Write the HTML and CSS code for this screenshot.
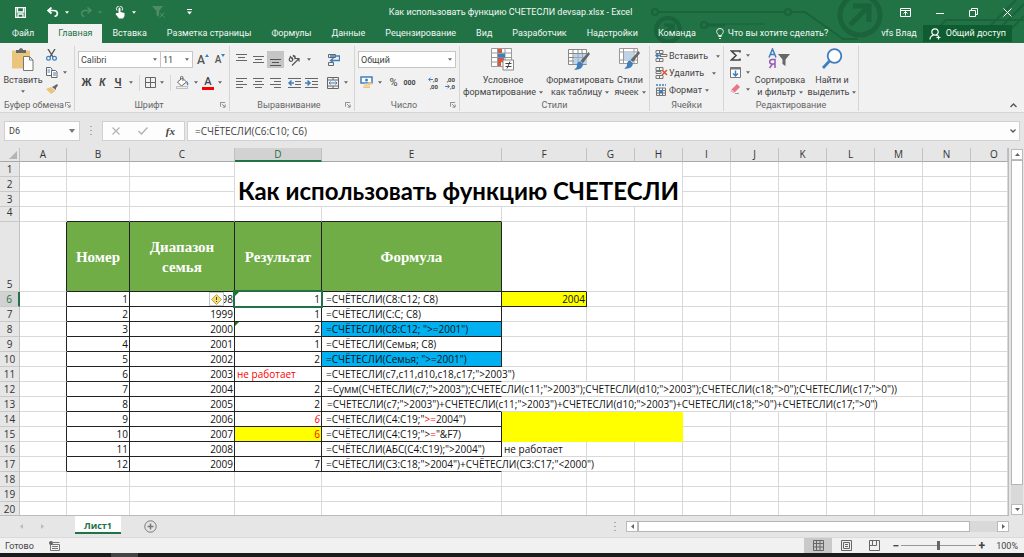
FILE: index.html
```html
<!DOCTYPE html>
<html lang="ru">
<head>
<meta charset="utf-8">
<title>Как использовать функцию СЧЕТЕСЛИ devsap.xlsx - Excel</title>
<link rel="stylesheet" href="styles.css">
</head>
<body>
<svg class="defs" width="0" height="0" aria-hidden="true">
  <symbol id="down" viewBox="0 0 5 3"><path d="M0 0h5L2.500 3z" fill="currentColor"/></symbol>
  <symbol id="launch" viewBox="0 0 7 7"><path d="M.5 5.500V.5H6M2.500 2.500l3 3M6 3v3H3" fill="none" stroke="#777"/></symbol>
  <symbol id="gridbase" viewBox="0 0 22 18"><path d="M.5.5h18v15H.5zM.5 4.500h18M.5 8.500h18M.5 12h18M5 .5v15M10 .5v15M14 .5v15" fill="#fff" stroke="#888"/></symbol>
  <symbol id="brush" viewBox="0 0 16 20"><path d="M14.500 1 16 3 9 12 6.500 10z" fill="#666"/><path d="M6 10.500 9 13c0 4-4 6.500-9 5.500 3-1.500 3-3 3-5 .5-2 1.500-3 3-3z" fill="#3f7fc0"/></symbol>
</svg>

<header class="top">
  <svg class="circuit" width="374" height="43" viewBox="650 0 374 43" fill="none" stroke="#1b633b" stroke-width="2" aria-hidden="true">
    <circle cx="655" cy="12" r="3"/><path d="M658 12h127"/><circle cx="788" cy="12" r="3"/><path d="M791 12h14l38 27h15"/>
    <circle cx="668" cy="30" r="12" stroke-width="4"/><path d="M662 36l10-10m-8-1h9v9" stroke-width="3"/>
    <circle cx="704" cy="25" r="3"/><path d="M707 25h18" stroke-width="3"/><path d="M725 24h40" stroke-width="1"/>
    <circle cx="860" cy="15" r="20" stroke-width="5"/><path d="M850 25l17-17M853 6h16v16" stroke-width="5"/>
    <path d="M938 28l8-8h78M986 30l30-30M994 34l30-30M1006 34l18-18"/>
  </svg>
  <div class="titlebar">
    <div class="quick">
      <button class="i q1" aria-label="Сохранить"><svg width="11" height="11" viewBox="0 0 11 11" fill="none" stroke="#fff"><path d="M.7.7h9.600v9.600H.7zM2.500 1v4h6V1M3 10V7h5v3" stroke-width="1.300"/></svg></button>
      <button class="i q2" aria-label="Отменить"><svg width="12" height="10" viewBox="0 0 12 10" fill="none" stroke="#fff" stroke-width="1.700"><path d="M4.500.5 1 3.500l3.500 3M1.500 3.500h5c5 0 5 5 1 6"/></svg></button>
      <button class="i q3 w" aria-label="Список отмены"><svg width="4" height="3"><use href="#down"/></svg></button>
      <button class="i q2 dim" aria-label="Повторить"><svg width="12" height="10" viewBox="0 0 12 10" fill="none" stroke="#4b8d67" stroke-width="1.500"><path d="M7.500.5 11 3.500l-3.500 3M10.500 3.500h-5c-5 0-5 5-1 6"/></svg></button>
      <button class="i q3 dim" aria-label="Список повтора"><svg width="4" height="3"><use href="#down"/></svg></button>
      <button class="i q4" aria-label="Режим касания"><svg width="10" height="13" viewBox="0 0 10 13"><path d="M3.500 7V2.500a1 1 0 0 1 2 0V6l4 1v3L8 12.500H4L.5 8l1-1z" fill="#fff"/><path d="M2 4.500a3 3 0 1 1 5 0" fill="none" stroke="#fff"/></svg></button>
      <button class="i q5 w" aria-label="Параметры касания"><svg width="4" height="3"><use href="#down"/></svg></button>
      <button class="i q6" aria-label="Очистить фильтр"><svg width="13" height="12" viewBox="0 0 13 12"><path d="M0 0h11L7 5v6L4.500 9V5z" fill="#4b8d67"/><path d="M7.500 6.500l5 5m0-5-5 5" stroke="#4b8d67"/></svg></button>
      <button class="i q7 w" aria-label="Настройка панели"><svg width="5" height="6" viewBox="0 0 5 6"><path d="M0 .5h5" stroke="#fff"/><path d="M0 2.500h5L2.500 5.500z" fill="#fff"/></svg></button>
    </div>
    <h1 class="caption">Как использовать функцию СЧЕТЕСЛИ devsap.xlsx - Excel</h1>
    <div class="winbtns">
      <button class="i" aria-label="Параметры ленты"><svg width="11" height="9" viewBox="0 0 11 9" fill="none" stroke="#fff"><path d="M.5.5h10v8H.5zM.5 2.500h10M5.500 7.500v-4M3.500 5.500l2-2 2 2"/></svg></button>
      <button class="i" aria-label="Свернуть"><svg width="8" height="9" viewBox="0 0 8 9"><path d="M0 5.500h8" stroke="#fff"/></svg></button>
      <button class="i" aria-label="Восстановить"><svg width="9" height="9" viewBox="0 0 9 9" fill="none" stroke="#fff"><path d="M.5 2.500h6v6h-6zM2.500 2.500v-2h6v6h-2"/></svg></button>
      <button class="i" aria-label="Закрыть"><svg width="9" height="9" viewBox="0 0 9 9"><path d="M.5.5l8 8m0-8-8 8" stroke="#fff"/></svg></button>
    </div>
  </div>
  <nav class="tabs">
    <a class="file" href="#">Файл</a><a class="on" href="#">Главная</a><a href="#">Вставка</a><a href="#">Разметка страницы</a><a href="#">Формулы</a><a href="#">Данные</a><a href="#">Рецензирование</a><a href="#">Вид</a><a href="#">Разработчик</a><a href="#">Надстройки</a><a href="#">Команда</a>
    <a class="tell" href="#"><svg width="8" height="11" viewBox="0 0 8 11" fill="none" stroke="#e6f1ea"><path d="M2.500 7.500C2.500 6 .6 5.500.6 3.500a3.400 3 0 0 1 6.800 0c0 2-1.900 2.500-1.900 4zM2.500 8.500h3M3 10.500h2"/></svg>Что вы хотите сделать?</a>
    <span class="user">vfs Влад</span>
    <button class="share"><svg width="12" height="12" viewBox="0 0 12 12" fill="none" stroke="#fff" stroke-width="1.200"><circle cx="6" cy="4" r="3.200"/><path d="M1 11.500c0-3 2-4 3.500-4.500M7.500 7l1 1M9.500 7.500v4M7.500 9.500h4"/></svg>Общий доступ</button>
  </nav>
</header>

<section class="ribbon">
  <div class="group g-clip">
    <div class="body">
      <button class="big paste"><svg width="22" height="23" viewBox="0 0 22 23"><path d="M0 2.500h18v18H0z" fill="#ecc57d"/><path d="M4 5V2h3c0-2.500 4-2.500 4 0h3v3z" fill="#666"/><path d="M11.500 8.500h6l3.500 3.500v10.500h-9.500z" fill="#fff" stroke="#777"/><path d="M17.500 8.500V12H21" fill="none" stroke="#777"/></svg><span>Вставить</span><svg class="dn" width="4" height="3"><use href="#down"/></svg></button>
      <div class="stack">
        <button class="i" aria-label="Вырезать"><svg width="11" height="12" viewBox="0 0 11 12" fill="none"><path d="M2 0l5 8M9 0L4 8" stroke="#555" stroke-width="1.400"/><circle cx="2.500" cy="9.200" r="1.900" stroke="#3f7fc0" stroke-width="1.200"/><circle cx="8.500" cy="9.200" r="1.900" stroke="#3f7fc0" stroke-width="1.200"/></svg></button>
        <button class="i" aria-label="Копировать"><svg width="12" height="11" viewBox="0 0 12 11" fill="#fff" stroke="#666"><path d="M.5.5h4L6 2v6.500H.5z"/><path d="M5.500 3.500h4L11 5v5.500H5.500z"/><path d="M7 6h3M7 8h3M1.500 3H4M1.500 5H4" stroke="#3f7fc0"/></svg><svg class="dn gap" width="4" height="3"><use href="#down"/></svg></button>
        <button class="i" aria-label="Формат по образцу"><svg width="12" height="10" viewBox="0 0 12 10"><path d="M6 3l2-1 3-2 1 1.500-2 2.500v2z" fill="#666"/><path d="M5 3l4.500 4L5 10 0 5z" fill="#ecc57d"/></svg></button>
      </div>
    </div>
    <div class="label"><span>Буфер обмена</span><svg width="6" height="6"><use href="#launch"/></svg></div>
  </div>

  <div class="group g-font">
    <div class="rows">
      <div class="row">
        <label class="combo w83"><select aria-label="Шрифт"><option>Calibri</option></select><svg width="4" height="3"><use href="#down"/></svg></label><label class="combo w32"><select aria-label="Размер шрифта"><option>11</option></select><svg width="4" height="3"><use href="#down"/></svg></label>
        <button class="i w20 glyph" aria-label="Увеличить размер шрифта">A<svg class="sup" width="4" height="3" viewBox="0 0 4 3"><path d="M0 3h4L2 0z" fill="#3f7fc0"/></svg></button>
        <button class="i w14 glyph sm" aria-label="Уменьшить размер шрифта">A<svg class="sup" width="4" height="3" viewBox="0 0 4 3"><path d="M0 0h4L2 3z" fill="#3f7fc0"/></svg></button>
      </div>
      <div class="row">
        <button class="i w17 fmt">Ж</button><button class="i w15 fmt it">К</button><button class="i w16 fmt un">Ч</button><button class="i w10" aria-label="Подчеркивание"><svg class="dn" width="4" height="3"><use href="#down"/></svg></button><i class="vs"></i>
        <button class="i w14" aria-label="Границы"><svg width="11" height="11" viewBox="0 0 11 11" fill="none" stroke="#666"><path d="M.5.5h10v10H.5zM5.500.5v10M.5 5.500h10"/></svg></button><button class="i w10" aria-label="Виды границ"><svg class="dn" width="4" height="3"><use href="#down"/></svg></button><i class="vs"></i>
        <button class="i w17" aria-label="Цвет заливки"><svg width="13" height="13" viewBox="0 0 13 13"><path d="M1.500 6l5-4 4 4-5 4z" fill="#fff" stroke="#666"/><path d="M4.500 4V1.500a1.200 1.200 0 0 1 2.400 0V5" fill="none" stroke="#666"/><path d="M10.500 5c2 1 2 3 1.500 4.500-1 0-1.500-2-1.500-4.500z" fill="#3f7fc0"/><path d="M.5 10.500h11v2H.5z" fill="#eee" stroke="#aaa" stroke-width=".7"/></svg></button><button class="i w10" aria-label="Цвета заливки"><svg class="dn" width="4" height="3"><use href="#down"/></svg></button>
        <button class="i fcolor" aria-label="Цвет текста">A</button><button class="i w10" aria-label="Цвета текста"><svg class="dn" width="4" height="3"><use href="#down"/></svg></button>
      </div>
    </div>
    <div class="label"><span>Шрифт</span><svg width="6" height="6"><use href="#launch"/></svg></div>
  </div>

  <div class="group g-align">
    <div class="rows">
      <div class="row">
        <button class="i w17" aria-label="По верхнему краю"><svg width="11" height="12" viewBox="0 0 11 12" stroke="#666"><path d="M0 .5h11M2 3.500h7M0 6.500h11"/></svg></button>
        <button class="i w17" aria-label="По середине"><svg width="11" height="10" viewBox="0 0 11 10" stroke="#666"><path d="M0 1.500h11M2 4.500h7M0 7.500h11"/></svg></button>
        <button class="i w17 sel" aria-label="По нижнему краю"><svg width="11" height="12" viewBox="0 0 11 12" stroke="#555"><path d="M0 5.500h11M2 8.500h7M0 11.500h11"/></svg></button>
        <button class="i w20" aria-label="Ориентация"><svg width="12" height="12" viewBox="0 0 12 12" fill="none" stroke="#555" stroke-width="1.200"><circle cx="3" cy="5.500" r="1.800"/><path d="M2 2l3 4M5 2.500c2-2 3 1 1.500 2.500M5 1l3 4M4 11.500l7-7M8 4.500h3v3"/></svg></button>
        <button class="i w10" aria-label="Виды ориентации"><svg class="dn" width="4" height="3"><use href="#down"/></svg></button><i class="sp11"></i>
        <button class="i w17" aria-label="Перенести текст"><svg width="12" height="12" viewBox="0 0 12 12" fill="none"><path d="M.5.5h7v3h-7zM.5 8.500h5v3h-5z" stroke="#666"/><path d="M2 2h9.500v4.500H3M5.500 4l-3 2.500 3 2.500" stroke="#3f7fc0" stroke-width="1.300"/></svg></button>
      </div>
      <div class="row">
        <button class="i w17" aria-label="По левому краю"><svg width="11" height="10" viewBox="0 0 11 10" stroke="#666"><path d="M0 .5h11M0 3.500h7M0 6.500h11M0 9.500h7"/></svg></button>
        <button class="i w17" aria-label="По центру"><svg width="11" height="10" viewBox="0 0 11 10" stroke="#666"><path d="M0 .5h11M2 3.500h7M0 6.500h11M2 9.500h7"/></svg></button>
        <button class="i w17" aria-label="По правому краю"><svg width="11" height="10" viewBox="0 0 11 10" stroke="#666"><path d="M0 .5h11M4 3.500h7M0 6.500h11M4 9.500h7"/></svg></button>
        <button class="i w20" aria-label="Уменьшить отступ"><svg width="13" height="10" viewBox="0 0 13 10" stroke="#666" fill="none"><path d="M0 .5h13M7 3.500h6M7 6.500h6M0 9.500h13"/><path d="M6 5H1M3.500 2.500 1 5l2.500 2.500" stroke="#3f7fc0" stroke-width="1.500"/></svg></button>
        <button class="i w14" aria-label="Увеличить отступ"><svg width="13" height="10" viewBox="0 0 13 10" stroke="#666" fill="none"><path d="M0 .5h13M7 3.500h6M7 6.500h6M0 9.500h13"/><path d="M0 5h5M2.500 2.500 5 5 2.500 7.500" stroke="#3f7fc0" stroke-width="1.500"/></svg></button>
        <i class="vs"></i>
        <button class="i w17" aria-label="Объединить"><svg width="12" height="12" viewBox="0 0 12 12" fill="none"><path d="M.5.5h11v11H.5zM.5 3h11M.5 9h11M6 .5V3M6 9v2.500" stroke="#666"/><path d="M2 6h8M3.500 4.500 2 6l1.500 1.500M8.500 4.500 10 6 8.500 7.500" stroke="#3f7fc0"/></svg></button><button class="i w10" aria-label="Виды объединения"><svg class="dn" width="4" height="3"><use href="#down"/></svg></button>
      </div>
    </div>
    <div class="label"><span>Выравнивание</span><svg width="6" height="6"><use href="#launch"/></svg></div>
  </div>

  <div class="group g-num">
    <div class="rows">
      <div class="row"><label class="combo wide"><select aria-label="Числовой формат"><option>Общий</option></select><svg width="4" height="3"><use href="#down"/></svg></label></div>
      <div class="row">
        <button class="i w17" aria-label="Денежный формат"><svg width="13" height="13" viewBox="0 0 13 13" fill="none"><path d="M1 1h11v6H1z" fill="#fff" stroke="#3f7fc0" stroke-width="1.500"/><circle cx="6.500" cy="4" r="1.500" fill="#3f7fc0"/><path d="M4 8h6v4H3z" fill="#ecc57d"/><path d="M4 8h8M3 10h8" stroke="#fff" stroke-width=".6"/><ellipse cx="10" cy="7.500" rx="2.500" ry="1.300" fill="#ecc57d"/></svg></button><button class="i w10" aria-label="Денежные форматы"><svg class="dn" width="4" height="3"><use href="#down"/></svg></button>
        <button class="i w17 pct">%</button><button class="i w15 zeros">000</button><i class="vs"></i>
        <button class="i w17 dec" aria-label="Увеличить разрядность"><span><svg width="5" height="5" viewBox="0 0 5 5"><path d="M5 2.500H.7M2.500.7.7 2.500l1.800 1.800" fill="none" stroke="#3f7fc0"/></svg>,0</span><span>,00</span></button><button class="i w17 dec" aria-label="Уменьшить разрядность"><span>,00</span><span><svg width="5" height="5" viewBox="0 0 5 5"><path d="M0 2.500h4.300M2.500.7l1.800 1.800-1.800 1.800" fill="none" stroke="#3f7fc0"/></svg>,0</span></button>
      </div>
    </div>
    <div class="label"><span>Число</span><svg width="6" height="6"><use href="#launch"/></svg></div>
  </div>

  <div class="group g-style">
    <div class="body">
      <button class="big b88"><svg width="24" height="23" viewBox="0 0 24 23"><path d="M.5.5h20v18H.5zM.5 5h20M.5 9.500h20M.5 14h20M6.500.5v18M14 .5v18" fill="#fff" stroke="#999"/><path d="M7 1h4v4H7zM7 10h6v4H7zM7 14h3v4H7z" fill="#d9583b"/><path d="M7 5.500h7v4H7z" fill="#3f7fc0"/><path d="M12 12h10.500v10H12z" fill="#fff" stroke="#888"/><path d="M14.500 15.500h6M14.500 18.500h6M19 13.500l-3 7" stroke="#444"/></svg><span>Условное<br>форматирование<svg class="dn" width="4" height="3"><use href="#down"/></svg></span></button>
      <button class="big b68"><svg width="24" height="23" viewBox="0 0 24 23"><use href="#gridbase" width="22" height="18" y="1"/><path d="M6 6h13v10H6z" fill="#bcd3e8"/><path d="M6 9.500h13M10 6v10M14.500 6v10" stroke="#9ab"/><use href="#brush" x="6" y="3" width="16" height="20"/></svg><span>Форматировать<br>как таблицу<svg class="dn" width="4" height="3"><use href="#down"/></svg></span></button>
      <button class="big b30"><svg width="24" height="23" viewBox="0 0 24 23"><path d="M1.500.5h18v15h-18zM1.500 4h18M1.500 12h18M5.500.5v15M16 .5v15" fill="#fff" stroke="#999"/><path d="M6 4.500h10v7.500H6z" fill="#bcd3e8"/><use href="#brush" x="6" y="2" width="16" height="20"/></svg><span>Стили<br>ячеек<svg class="dn" width="4" height="3"><use href="#down"/></svg></span></button>
    </div>
    <div class="label"><span>Стили</span></div>
  </div>

  <div class="group g-cells">
    <div class="stack">
      <button class="line"><svg width="13" height="12" viewBox="0 0 13 12" fill="none"><path d="M1 .5h7v3H1zM4.500.5v3M1 8.500h7v3H1zM4.500 8.500v3M5 4.500h7v2H5z" stroke="#777"/><path d="M6 5.500H1M3 3.500l-2 2 2 2" stroke="#3f7fc0" stroke-width="1.500"/></svg><span>Вставить</span><svg class="dn" width="4" height="3"><use href="#down"/></svg></button>
      <button class="line"><svg width="13" height="12" viewBox="0 0 13 12" fill="none"><path d="M1 .5h7v3H1zM4.500.5v3M1 8.500h7v3H1zM4.500 8.500v3M1 4.500h5v2H1z" stroke="#777"/><path d="M7 3l5 5m0-5L7 8" stroke="#d9583b" stroke-width="1.600"/></svg><span>Удалить</span><svg class="dn" width="4" height="3"><use href="#down"/></svg></button>
      <button class="line near"><svg width="13" height="12" viewBox="0 0 13 12" fill="none"><path d="M1 1h10" stroke="#3f7fc0" stroke-width="1.500" stroke-dasharray="2 1"/><path d="M1.500 4h9v7.500h-9zM1.500 6.500h9M1.500 9h9M4.500 4v7.500M7.500 4v7.500" stroke="#777"/><path d="M4 6h4v3H4z" fill="#3f7fc0"/></svg><span>Формат</span><svg class="dn" width="4" height="3"><use href="#down"/></svg></button>
    </div>
    <div class="label"><span>Ячейки</span></div>
  </div>

  <div class="group g-edit">
    <div class="body">
      <div class="stack">
        <button class="i" aria-label="Автосумма"><svg width="11" height="11" viewBox="0 0 11 11"><path d="M10 2.500V1H1.500L6 5.500 1.500 10H10V8.500" fill="none" stroke="#444" stroke-width="1.600"/></svg><svg class="dn gap" width="4" height="3"><use href="#down"/></svg></button>
        <button class="i" aria-label="Заполнить"><svg width="11" height="11" viewBox="0 0 11 11" fill="none"><path d="M.5.5h10v10H.5z" fill="#fff" stroke="#777"/><path d="M0 1.500h11" stroke="#777" stroke-width="2"/><path d="M5.500 3.500v5M3 6.500 5.500 9 8 6.500" stroke="#3f7fc0" stroke-width="1.500"/></svg><svg class="dn gap" width="4" height="3"><use href="#down"/></svg></button>
        <button class="i" aria-label="Очистить"><svg width="11" height="10" viewBox="0 0 11 10"><path d="M7 0l3 3-5.500 5.500-3-3z" fill="#e8768a"/><path d="M1.500 5.500l3 3-1 .8-3-2z" fill="#f3b5bf"/><path d="M5 9.500h4" stroke="#999"/></svg><svg class="dn gap" width="4" height="3"><use href="#down"/></svg></button>
      </div>
      <button class="big b54"><svg width="24" height="23" viewBox="0 0 24 23" fill="none"><path d="M1 9.500 4.500 1 8 9.500M2.500 6.500h4" stroke="#3f7fc0" stroke-width="1.500"/><path d="M7 20v-8.500H4C1 11.500 1 16 4 16h3M4.500 16 1.500 20" stroke="#9857b5" stroke-width="1.500"/><path d="M10 6h12l-4.500 5.500V18l-3-2v-4.500z" fill="#666"/></svg><span>Сортировка<br>и фильтр<svg class="dn" width="4" height="3"><use href="#down"/></svg></span></button>
      <button class="big b48"><svg width="24" height="23" viewBox="0 0 24 23" fill="none" stroke="#3f7fc0"><circle cx="14.500" cy="8" r="6.800" fill="#fff" stroke-width="1.800"/><path d="M9.500 13 3 20" stroke-width="2.800"/></svg><span>Найти и<br>выделить<svg class="dn" width="4" height="3"><use href="#down"/></svg></span></button>
    </div>
    <div class="label"><span>Редактирование</span></div>
  </div>
  <button class="i collapse" aria-label="Свернуть ленту"><svg width="7" height="5" viewBox="0 0 7 5"><path d="M.5 4l3-3 3 3" fill="none" stroke="#555" stroke-width="1.400"/></svg></button>
</section>

<section class="fbar">
  <label class="namebox"><input aria-label="Имя" value="D6"><svg width="6" height="4" viewBox="0 0 6 4"><path d="M0 0h6L3 4z" fill="#777"/></svg></label>
  <i class="dots"></i>
  <div class="fbtns">
    <button class="i" aria-label="Отмена"><svg width="8" height="8" viewBox="0 0 8 8"><path d="M.5.5l7 7m0-7-7 7" stroke="#b5b5b5" stroke-width="1.300"/></svg></button>
    <button class="i" aria-label="Ввод"><svg width="10" height="8" viewBox="0 0 10 8"><path d="M.5 4l3 3 6-6.500" fill="none" stroke="#b5b5b5" stroke-width="1.500"/></svg></button>
    <button class="i fx">fx</button>
  </div>
  <label class="finput"><input aria-label="Строка формул" value="=СЧЁТЕСЛИ(C6:C10; C6)"><svg width="6" height="4" viewBox="0 0 6 4"><path d="M.5.5 3 3 5.500.5" fill="none" stroke="#555" stroke-width="1.300"/></svg></label>
</section>

<main class="work">
  <div class="gridwrap">
  <table class="sheet">
    <colgroup><col class="c0"><col class="cA"><col class="cB"><col class="cC"><col class="cD"><col class="cE"><col class="cF"><col class="cG"><col class="cG"><col class="cG"><col class="cG"><col class="cG"><col class="cG"><col class="cG"><col class="cG"><col></colgroup>
    <thead><tr><th class="corner"><svg width="8" height="8" viewBox="0 0 8 8"><path d="M8 0v8H0z" fill="#b4b4b4"/></svg></th><th>A</th><th>B</th><th>C</th><th class="cur">D</th><th>E</th><th>F</th><th>G</th><th>H</th><th>I</th><th>J</th><th>K</th><th>L</th><th>M</th><th>N</th><th class="last">O</th></tr></thead>
    <tbody>
    <tr><th>1</th> <td><td><td> <td class="big-title" colspan="5" rowspan="3">Как использовать функцию СЧЕТЕСЛИ <td><td> <td><td><td><td><td></tr>
    <tr><th>2</th> <td><td><td> <td><td> <td><td><td><td><td></tr>
    <tr><th>3</th> <td><td><td> <td><td> <td><td><td><td><td></tr>
    <tr><th class="four">4</th> <td> <td class="u"><td class="u"><td class="u"><td class="u"> <td><td><td><td><td> <td><td><td><td><td></tr>
    <tr class="tall"><th>5</th><td class="r"><td class="h">Номер<td class="h">Диапазон<br>семья<td class="h">Результат<td class="h">Формула<td class="u"><td><td><td><td> <td><td><td><td><td></tr>
    <tr class="now"><th>6</th><td class="r"><td class="b n">1<td class="b n warned">1998<button class="warn" aria-label="Ошибка в ячейке"><svg width="11" height="11" viewBox="0 0 11 11"><path d="M5.500.5l5 5-5 5-5-5z" fill="#f7dc6f" stroke="#c3a64a"/><path d="M5.500 3v3M5.500 7v1" stroke="#444"/></svg></button><td class="b n tri active">1<td class="b">=СЧЁТЕСЛИ(C8:C12; C8)<td class="b n yel">2004<td><td><td><td> <td><td><td><td><td></tr>
    <tr><th>7</th><td class="r"><td class="b n">2<td class="b n">1999<td class="b n">1<td class="b">=СЧЁТЕСЛИ(C:C; C8)<td><td><td><td><td> <td><td><td><td><td></tr>
    <tr><th>8</th><td class="r"><td class="b n">3<td class="b n">2000<td class="b n tri">2<td class="b blue">=СЧЁТЕСЛИ(C8:C12; "&gt;=2001")<td><td><td><td><td> <td><td><td><td><td></tr>
    <tr><th>9</th><td class="r"><td class="b n">4<td class="b n">2001<td class="b n">1<td class="b">=СЧЁТЕСЛИ(Семья; C8)<td><td><td><td><td> <td><td><td><td><td></tr>
    <tr><th>10</th><td class="r"><td class="b n">5<td class="b n">2002<td class="b n">2<td class="b blue">=СЧЁТЕСЛИ(Семья; "&gt;=2001")<td><td><td><td><td> <td><td><td><td><td></tr>
    <tr><th>11</th><td class="r"><td class="b n">6<td class="b n">2003<td class="b red left">не работает<td class="b o">=СЧЕТЕСЛИ(c7,c11,d10,c18,c17;"&gt;2003")<td><td><td><td><td> <td><td><td><td><td></tr>
    <tr><th>12</th><td class="r"><td class="b n">7<td class="b n">2004<td class="b n">2<td class="b o ind">=Сумм(СЧЕТЕСЛИ(c7;"&gt;2003");СЧЕТЕСЛИ(c11;"&gt;2003");СЧЕТЕСЛИ(d10;"&gt;2003");СЧЕТЕСЛИ(c18;"&gt;0");СЧЕТЕСЛИ(c17;"&gt;0"))<td class="o"><td class="o"><td class="o"><td class="o"><td class="o"> <td class="o"><td class="o"><td><td><td></tr>
    <tr><th>13</th><td class="r"><td class="b n">8<td class="b n">2005<td class="b n">2<td class="b o ind">=СЧЕТЕСЛИ(c7;"&gt;2003")+СЧЕТЕСЛИ(c11;"&gt;2003")+СЧЕТЕСЛИ(d10;"&gt;2003")+СЧЕТЕСЛИ(c18;"&gt;0")+СЧЕТЕСЛИ(c17;"&gt;0")<td class="o"><td class="o"><td class="o"><td class="o"><td class="o"> <td class="o"><td><td><td><td></tr>
    <tr><th>14</th><td class="r"><td class="b n">9<td class="b n">2006<td class="b n red it">6<td class="b">=СЧЕТЕСЛИ(C4:C19;"<span class="red">&gt;=</span>2004")<td class="y"><td class="y"><td class="y"><td><td> <td><td><td><td><td></tr>
    <tr><th>15</th><td class="r"><td class="b n">10<td class="b n">2007<td class="b n yel red">6<td class="b">=СЧЁТЕСЛИ(C4:C19;"&gt;<span class="red">=</span>"&amp;F7)<td class="y"><td class="y"><td class="y"><td><td> <td><td><td><td><td></tr>
    <tr><th>16</th><td class="r"><td class="b n">11<td class="b n">2008<td class="b n"><td class="b">=СЧЁТЕСЛИ(АБС(C4:C19);"&gt;2004")<td class="left">не работает<td><td><td><td> <td><td><td><td><td></tr>
    <tr><th>17</th><td class="r"><td class="b n">12<td class="b n">2009<td class="b n">7<td class="b o">=СЧЁТЕСЛИ(C3:C18;"&gt;2004")+СЧЁТЕСЛИ(C3:C17;"&lt;2000")<td><td><td><td><td> <td><td><td><td><td></tr>
    <tr><th>18</th> <td><td><td><td><td> <td><td><td><td><td> <td><td><td><td><td></tr>
    <tr><th>19</th> <td><td><td><td><td> <td><td><td><td><td> <td><td><td><td><td></tr>
    <tr><th>20</th> <td><td><td><td><td> <td><td><td><td><td> <td><td><td><td><td></tr>
    </tbody>
  </table>
  </div>
  <div class="vscroll">
    <button class="sb" aria-label="Вверх"><svg width="5" height="3" viewBox="0 0 5 3"><path d="M0 3h5L2.500 0z" fill="#666"/></svg></button>
    <div class="vthumb"></div><div class="vrest"></div>
    <button class="sb" aria-label="Вниз"><svg width="5" height="3" color="#666"><use href="#down"/></svg></button>
  </div>
</main>

<section class="sheets">
  <div class="nav"><svg width="3" height="5" viewBox="0 0 3 5"><path d="M3 0v5L0 2.500z" fill="#bbb"/></svg><svg width="3" height="5" viewBox="0 0 3 5"><path d="M0 0v5l3-2.500z" fill="#bbb"/></svg></div>
  <a class="stab" href="#">Лист1</a>
  <button class="i add" aria-label="Новый лист"><svg width="13" height="13" viewBox="0 0 13 13" fill="none" stroke="#777"><circle cx="6.500" cy="6.500" r="5.700"/><path d="M3.500 6.500h6M6.500 3.500v6" stroke-width="1.500"/></svg></button>
  <i class="dots"></i>
  <div class="hscroll">
    <button class="sb" aria-label="Влево"><svg width="3" height="5" viewBox="0 0 3 5"><path d="M3 0v5L0 2.500z" fill="#666"/></svg></button>
    <div class="hthumb"></div><div class="hrest"></div>
    <button class="sb" aria-label="Вправо"><svg width="3" height="5" viewBox="0 0 3 5"><path d="M0 0v5l3-2.500z" fill="#666"/></svg></button>
  </div>
</section>

<footer class="status">
  <span class="ready">Готово</span>
  <svg width="11" height="10" viewBox="0 0 11 10" fill="none" stroke="#777"><path d="M1.500 3.500h9v6h-9zM4 1.500h6.500M3 5.500h6M3 7.500h6"/><circle cx="2" cy="2" r="2" fill="#666" stroke="none"/></svg>
  <div class="views">
    <button class="i on" aria-label="Обычный"><svg width="11" height="11" viewBox="0 0 11 11" fill="none" stroke="#666"><path d="M.5.5h10v10H.5zM.5 3.500h10M.5 7h10M3.500.5v10M7 .5v10"/></svg></button>
    <button class="i" aria-label="Разметка страницы"><svg width="11" height="11" viewBox="0 0 11 11" fill="none" stroke="#666"><path d="M.5.5h10v10H.5zM2.500 2.500h6v6h-6zM4 4.500h3M4 6.500h3"/></svg></button>
    <button class="i" aria-label="Страничный"><svg width="11" height="11" viewBox="0 0 11 11" fill="none" stroke="#666"><path d="M.5.5h10v10H.5zM3.500.5v5h4v-5M.5 5.500h3"/></svg></button>
  </div>
  <button class="i zb">−</button>
  <input class="zoom" type="range" min="0" max="100" value="50" aria-label="Масштаб">
  <button class="i zb">+</button>
  <span class="pc">100%</span>
</footer>
<div class="desk"><i></i></div>
</body>
</html>
```
FILE: styles.css
```css
* { box-sizing: border-box; }
html, body { height: 100%; }
body { margin: 0; display: flex; flex-direction: column; overflow: hidden; background: #e6e6e6; color: #444; font: 9px/12px Roboto, "Open Sans", sans-serif; }
button, input, select { font: inherit; color: inherit; border: 0; background: none; padding: 0; margin: 0; }
a { color: inherit; text-decoration: none; }
svg { display: block; flex: none; }
.defs { position: absolute; }
.i { display: flex; align-items: center; justify-content: center; flex: none; }
.dn { color: #666; }

.top { position: relative; flex: none; background: #217346; color: #f2f8f4; }
.circuit { position: absolute; right: 0; top: 0; }
.titlebar { position: relative; display: flex; align-items: center; height: 24px; }
.quick { display: flex; align-items: center; width: 200px; height: 24px; padding-left: 12px; }
.quick .w { color: #fff; }
.dim, .quick .dim { color: #4b8d67; }
.q1 { width: 16px; margin-right: 16px; }
.q2 { width: 18px; }
.q3 { width: 10px; margin-right: 5px; }
.q4 { width: 20px; }
.q5 { width: 8px; margin-right: 8px; }
.q6 { width: 24px; }
.q7 { width: 32px; margin-left: 3px; }
.caption { flex: 1; margin: 0; text-align: center; font-size: 9px; font-weight: 400; }
.winbtns { display: flex; width: 203px; justify-content: flex-end; gap: 25px; padding-right: 12px; }

.tabs { position: relative; display: flex; align-items: stretch; height: 19px; line-height: 19px; white-space: nowrap; }
.tabs a { padding: 0 10px; }
.tabs .file { padding: 0 14px 0 12px; }
.tabs .on { background: #f1f1f1; color: #217346; }
.tabs .tell { display: flex; align-items: center; gap: 4px; }
.user { margin-left: auto; }
.share { display: flex; align-items: center; gap: 5px; height: 17px; margin: 1px 12px 0 6px; padding: 0 6px; background: #0e5c2f; }

.ribbon { display: flex; flex: none; height: 70px; background: #f1f1f1; border-bottom: 1px solid #d5d5d5; white-space: nowrap; }
.group { display: flex; flex-direction: column; justify-content: space-between; flex: none; margin: 3px 0 1px; border-right: 1px solid #d5d5d5; }
.g-clip { width: 75px; }
.g-font { width: 155px; }
.g-align { width: 125px; }
.g-num { width: 105px; }
.g-style { width: 190px; }
.g-cells { width: 74px; }
.g-edit { width: 135px; }
.label { display: flex; align-items: center; height: 12px; padding: 0 3px; color: #666; }
.label span { flex: 1; text-align: center; }
.body { display: flex; padding-top: 1px; }
.rows { display: flex; flex-direction: column; gap: 6px; padding: 5px 3px 0; }
.row { display: flex; align-items: center; height: 17px; }
.row .i { height: 17px; }
.stack { display: flex; flex-direction: column; align-items: flex-start; gap: 1px; }
.stack .i { height: 16px; justify-content: flex-start; }
.stack .line { display: flex; align-items: center; height: 16px; gap: 1px; }
.line .dn { margin-left: 7px; }
.near .dn { margin-left: 2px; }
.gap { margin-left: 5px; }
.g-cells .stack { padding: 2px 0 0 5px; }
.g-edit .stack { width: 29px; padding-left: 6px; }
.big { display: flex; flex-direction: column; align-items: center; line-height: 12px; }
.big > svg:first-child { margin: 1px 0 3px; }
.big .dn { display: inline-block; margin-left: 3px; vertical-align: middle; }
.big > .dn { display: block; margin: 4px 0 0; }
.paste { width: 46px; }
.b88 { width: 86px; }
.b68 { width: 68px; }
.b30 { width: 32px; }
.b54 { width: 54px; }
.b48 { width: 50px; }

.combo { display: grid; align-items: center; height: 17px; background: #fff; border: 1px solid #c6c6c6; flex: none; }
.combo select { grid-area: 1/1; appearance: none; width: 100%; height: 15px; padding-left: 2px; }
.combo svg { grid-area: 1/1; justify-self: end; margin-right: 3px; pointer-events: none; color: #666; }
.combo + .combo { border-left: 0; }
.w83 { width: 83px; } .w32 { width: 32px; } .wide { width: 98px; }
.w20 { width: 20px; } .w17 { width: 17px; } .w16 { width: 16px; } .w15 { width: 15px; } .w14 { width: 14px; } .w10 { width: 10px; }
.sp11 { width: 11px; }
.vs { width: 1px; height: 16px; margin: 0 3px; background: #d5d5d5; }
.glyph { font-size: 12px; font-weight: 500; color: #555; }
.glyph.sm { font-size: 10px; }
.sup { align-self: flex-start; margin-top: 3px; }
.fmt { font-size: 10px; font-weight: 700; }
.fmt.it { font-style: italic; }
.fmt.un { text-decoration: underline; }
.row .fcolor { width: 12px; height: 14px; margin: 0 1px; font-size: 11px; line-height: 11px; font-weight: 500; border-bottom: 3px solid #f00; }
.sel { background: #c5c5c5; }
.pct { font-size: 11px; }
.zeros { font-size: 7px; font-weight: 700; }
.dec { flex-direction: column; align-items: flex-end; padding-right: 2px; font-size: 6px; line-height: 7px; font-weight: 700; }
.dec span { display: flex; align-items: center; }
.collapse { margin: auto 7px 4px auto; }

.fbar { display: flex; align-items: center; flex: none; height: 35px; padding: 0 4px; }
.namebox, .fbtns, .finput { display: flex; align-items: center; height: 20px; background: #fdfdfd; border: 1px solid #d0d0d0; }
.namebox { width: 76px; padding: 0 4px; }
.namebox input { flex: 1; min-width: 0; }
.dots { width: 2px; height: 9px; margin: 0 10px; background: repeating-linear-gradient(#aaa 0 1px, transparent 1px 4px); }
.fbtns { width: 83px; justify-content: space-around; margin-right: 2px; }
.fx { font: italic 700 11px/12px "Liberation Serif", serif; }
.finput { flex: 1; padding: 0 3px 0 7px; }
.finput input { flex: 1; font: 10px/14px "Open Sans", sans-serif; }

.work { display: flex; flex: 1; min-height: 0; }
.gridwrap { flex: 1; min-width: 0; overflow: hidden; background: #fff; border-right: 1px solid #bbb; border-bottom: 1px solid #bbb; }
.sheet { width: 100%; table-layout: fixed; border-collapse: separate; border-spacing: 0; color: #111; font: 10px/14px "Open Sans", sans-serif; white-space: nowrap; }
.c0 { width: 20px; } .cA { width: 47px; } .cB { width: 63px; } .cC { width: 105px; } .cD { width: 87px; } .cE { width: 180px; } .cF { width: 85px; } .cG { width: 48px; }
.sheet th { height: 15px; padding: 0; background: #e6e6e6; font-weight: 400; color: #333; border-right: 1px solid #c0c0c0; border-bottom: 1px solid #c9c9c9; vertical-align: bottom; line-height: 13px; }
.sheet thead th { height: 14px; border-bottom-color: #a8a8a8; }
.sheet .corner svg { margin: 0 2px 2px auto; }
.sheet .last { padding-left: 10px; }
.sheet .four { vertical-align: top; line-height: 11px; }
.sheet .cur { background: #d2d2d2; color: #217346; border-bottom: 2px solid #217346; line-height: 12px; }
.sheet .now th { background: #d2d2d2; color: #217346; border-right: 2px solid #217346; }
.sheet td { height: 15px; padding: 0 0 0 4px; border-right: 1px solid #d9d9d9; border-bottom: 1px solid #d9d9d9; }
.sheet .tall td { height: 70px; }
.sheet .u { border-bottom-color: #222; }
.sheet .r { border-right-color: #222; }
.sheet .b { border-color: #222; }
.sheet .o { border-right-color: transparent; }
.sheet .n { text-align: right; padding: 0 1px 0 0; }
.sheet .left { padding-left: 2px; }
.sheet .ind { padding-left: 5px; }
.sheet .h { padding: 0; background: #70ad47; border-color: #222; color: #fff; text-align: center; font: 700 15px/20px "Liberation Serif", serif; }
.sheet .yel { background: #ff0; }
.sheet .y { background: #ff0; border-color: #ff0; }
.sheet .blue { background: #00b0f0; }
.sheet .red { color: #f00; }
.it { font-style: italic; }
.sheet .big-title { padding: 0 0 1px; text-align: center; vertical-align: bottom; color: #000; font: 700 24px/28px Lato, "Open Sans", sans-serif; }
.tri, .warned { position: relative; }
.tri::before { content: ""; position: absolute; left: 0; top: 0; border: 2px solid; border-color: #107c10 transparent transparent #107c10; }
.active::after { content: ""; position: absolute; inset: -1px; border: 1px solid #217346; outline: 1px solid #217346; }
.warn { position: absolute; right: 10px; top: 0; width: 15px; height: 14px; padding: 1px; background: #fff; border: 1px solid #c6c6c6; }
.warn svg { margin: auto; }

.vscroll { display: flex; flex-direction: column; width: 15px; padding: 1px 1px 1px 2px; background: #e6e6e6; }
.sb { display: flex; align-items: center; justify-content: center; flex: none; width: 12px; height: 11px; background: #fff; border: 1px solid #bbb; }
.vthumb { flex: 1; background: #fff; border: 1px solid #b5b5b5; }
.vrest { height: 19px; background: #d9d9d9; }

.sheets { display: flex; flex: none; align-items: flex-start; height: 21px; padding-right: 15px; }
.nav { display: flex; gap: 18px; width: 75px; padding: 8px 0 0 20px; }
.stab { height: 18px; padding: 0 9px; font-family: "Open Sans", sans-serif; line-height: 19px; background: #fff; color: #217346; font-weight: 700; border-bottom: 2px solid #217346; }
.add { margin: 4px 0 0 23px; }
.sheets .dots { margin: 6px 10px 0 auto; }
.hscroll { display: flex; width: 383px; height: 11px; margin-top: 5px; }
.hthumb { flex: 1; background: #fff; border: 1px solid #b5b5b5; }
.hrest { width: 27px; background: #d9d9d9; }

.status { display: flex; flex: none; align-items: center; height: 16px; padding-right: 6px; background: #f1f1f1; border-top: 1px solid #dadada; }
.ready { padding: 0 15px 0 5px; }
.views { display: flex; align-self: stretch; margin: 0 2px 0 auto; }
.views .i { width: 28px; }
.views .on { background: #c9c9c9; }
.zb { width: 11px; font-size: 12px; font-weight: 700; }
.zoom { appearance: none; width: 75px; height: 10px; background: linear-gradient(#999, #999) center/100% 1px no-repeat; }
.zoom::-webkit-slider-thumb { appearance: none; width: 3px; height: 9px; background: #666; }
.pc { margin-left: 9px; }
.desk { flex: none; height: 4px; background: #1b1b1b; }
.desk i { display: block; width: 27px; height: 4px; margin-left: 111px; background: #444; }
```
